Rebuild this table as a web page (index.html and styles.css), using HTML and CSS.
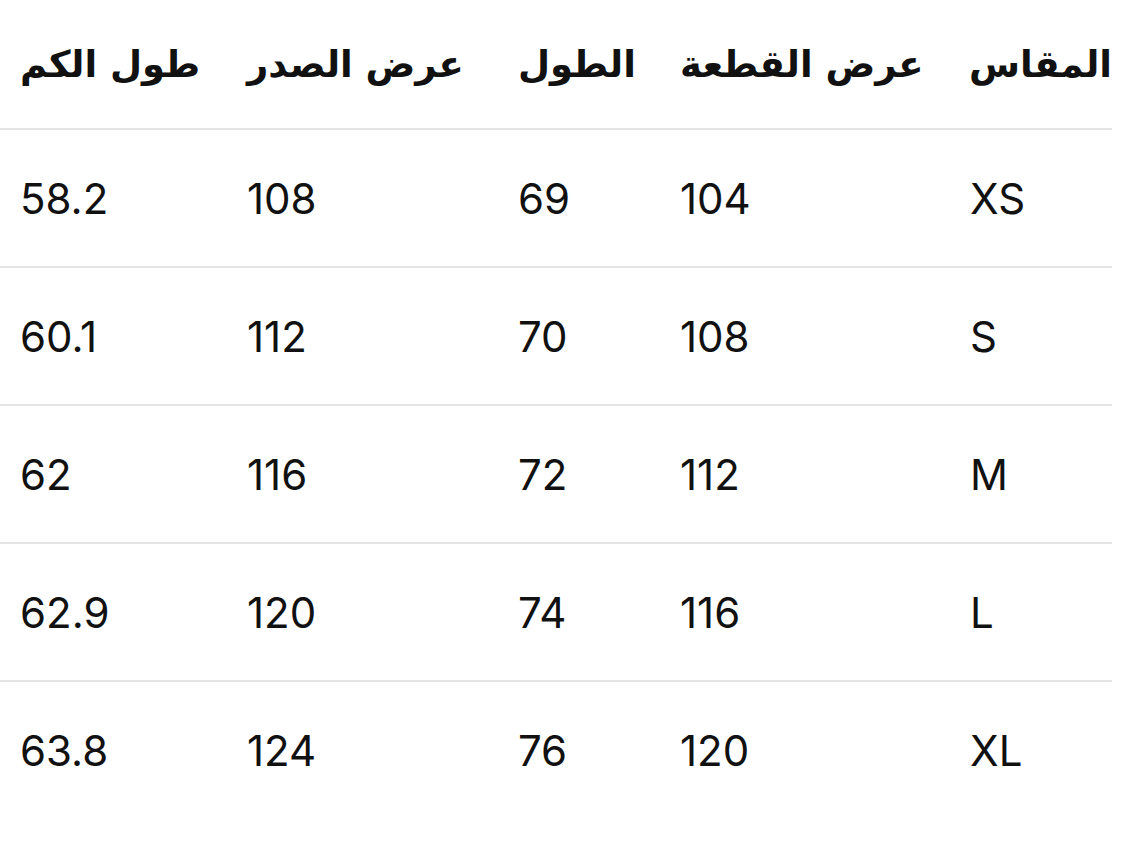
FILE: index.html
```html
<!DOCTYPE html>
<html lang="ar" dir="rtl">
<head>
<meta charset="utf-8">
<title>جدول المقاسات</title>
<link rel="stylesheet" href="styles.css">
</head>
<body>
<table class="size-table">
  <colgroup>
    <col class="c-size">
    <col class="c-piece">
    <col class="c-length">
    <col class="c-chest">
    <col class="c-sleeve">
  </colgroup>
  <thead>
    <tr>
      <th>المقاس</th>
      <th>عرض القطعة</th>
      <th>الطول</th>
      <th>عرض الصدر</th>
      <th>طول الكم</th>
    </tr>
  </thead>
  <tbody>
    <tr><td>XS</td><td>104</td><td>69</td><td>108</td><td>58.2</td></tr>
    <tr><td>S</td><td>108</td><td>70</td><td>112</td><td>60.1</td></tr>
    <tr><td>M</td><td>112</td><td>72</td><td>116</td><td>62</td></tr>
    <tr><td>L</td><td>116</td><td>74</td><td>120</td><td>62.9</td></tr>
    <tr><td>XL</td><td>120</td><td>76</td><td>124</td><td>63.8</td></tr>
  </tbody>
</table>
</body>
</html>
```

FILE: styles.css
```css
html, body {
  margin: 0;
  padding: 0;
  background: #ffffff;
}

body {
  color: #111111;
  font-family: Inter, "DejaVu Sans", sans-serif;
}

.size-table {
  width: 1112px;
  margin-left: 0;
  margin-right: auto;
  table-layout: fixed;
  border-collapse: collapse;
  border-spacing: 0;
}

.c-size { width: 162px; }
.c-piece { width: 290px; }
.c-length { width: 162px; }
.c-chest { width: 271px; }
.c-sleeve { width: 227px; }

.size-table th,
.size-table td {
  text-align: left;
  vertical-align: middle;
  padding: 0 0 0 20px;
  white-space: nowrap;
}

.size-table th {
  height: 128px;
  font-family: "DejaVu Sans", sans-serif;
  font-weight: bold;
  font-size: 37px;
  border-bottom: 2px solid #e4e4e4;
}

.size-table td {
  height: 136px;
  font-family: Inter, sans-serif;
  font-weight: 400;
  font-size: 42px;
  border-bottom: 2px solid #e4e4e4;
}

.size-table tbody tr:last-child td {
  border-bottom: none;
}
```
